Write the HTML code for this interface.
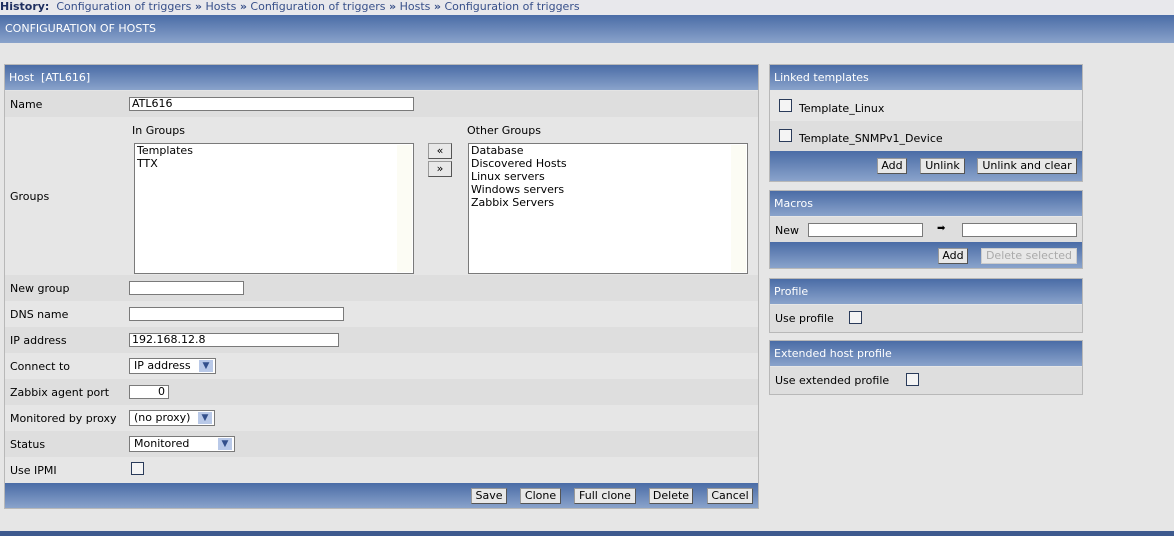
<html><head><style>
*{box-sizing:border-box}
body{margin:0;width:1174px;height:536px;background:#e6e6e6;font:11px "DejaVu Sans","Liberation Sans",sans-serif;color:#000;position:relative;overflow:hidden}
.a{position:absolute}
.hd{background:linear-gradient(#4a6ca6,#8aa3cb);color:#fff}
.r1{background:#dedede}.r2{background:#e6e6e6}
.in{position:absolute;background:#fff;border:1px solid #7a7a7a;height:14px;font-size:11px;line-height:12px;padding-left:2px}
.btn{position:absolute;background:#e8e8e8;border:1px solid #999;border-right-color:#555;border-bottom-color:#555;height:16px;line-height:14px;font-size:11px;text-align:center}
.cb{position:absolute;width:13px;height:13px;border:1px solid #2a3b5a;background:#f4f4f4}
.sel{position:absolute;background:#fff;border:1px solid #7a7a7a;height:16px;line-height:14px;padding-left:4px}
.sel i{position:absolute;right:2px;top:1px;width:14px;height:12px;background:#b9c9e8;color:#34508c;font-style:normal;font-size:9px;text-align:center;line-height:12px}
.lb{position:absolute;left:10px}
</style></head><body>
<div class="a" style="left:0;top:0;width:1174px;height:15px;background:#e8e8ec;line-height:14px"><b style="color:#1f2f60">History:</b>&nbsp; <span style="color:#38508a">Configuration of triggers <b>»</b> Hosts <b>»</b> Configuration of triggers <b>»</b> Hosts <b>»</b> Configuration of triggers</span></div>
<div class="a hd" style="left:0;top:15px;width:1174px;height:28px;line-height:28px;padding-left:5px">CONFIGURATION OF HOSTS</div>

<div class="a" style="left:4px;top:64px;width:755px;height:445px;border:1px solid #b8b8b8;background:#e4e4e4"></div>
<div class="a hd" style="left:5px;top:65px;width:753px;height:25px;line-height:25px;padding-left:4px">Host &nbsp;[ATL616]</div>
<div class="a r1" style="left:5px;top:91px;width:753px;height:26px"></div>
<div class="a r2" style="left:5px;top:117px;width:753px;height:158px"></div>
<div class="a r1" style="left:5px;top:275px;width:753px;height:26px"></div>
<div class="a r2" style="left:5px;top:301px;width:753px;height:26px"></div>
<div class="a r1" style="left:5px;top:327px;width:753px;height:26px"></div>
<div class="a r2" style="left:5px;top:353px;width:753px;height:26px"></div>
<div class="a r1" style="left:5px;top:379px;width:753px;height:26px"></div>
<div class="a r2" style="left:5px;top:405px;width:753px;height:26px"></div>
<div class="a r1" style="left:5px;top:431px;width:753px;height:26px"></div>
<div class="a r2" style="left:5px;top:457px;width:753px;height:26px"></div>
<div class="a hd" style="left:5px;top:483px;width:753px;height:25px"></div>

<div class="lb" style="top:98px">Name</div><div class="in" style="left:129px;top:97px;width:285px">ATL616</div>
<div class="lb" style="top:190px">Groups</div>
<div class="a" style="left:132px;top:124px">In Groups</div>
<div class="a" style="left:467px;top:124px">Other Groups</div>
<div class="a" style="left:134px;top:143px;width:280px;height:131px;background:#fff;border:1px solid #7a7a7a;line-height:13px;padding-left:2px">Templates<br>TTX</div>
<div class="a" style="left:397px;top:145px;width:15px;height:127px;background:#fcfcf4"></div>
<div class="a" style="left:468px;top:143px;width:280px;height:131px;background:#fff;border:1px solid #7a7a7a;line-height:13px;padding-left:2px">Database<br>Discovered Hosts<br>Linux servers<br>Windows servers<br>Zabbix Servers</div>
<div class="a" style="left:731px;top:145px;width:15px;height:127px;background:#fcfcf4"></div>
<div class="btn" style="left:428px;top:143px;width:24px">«</div>
<div class="btn" style="left:428px;top:161px;width:24px">»</div>
<div class="lb" style="top:282px">New group</div><div class="in" style="left:129px;top:281px;width:115px"></div>
<div class="lb" style="top:308px">DNS name</div><div class="in" style="left:129px;top:307px;width:215px"></div>
<div class="lb" style="top:334px">IP address</div><div class="in" style="left:129px;top:333px;width:210px">192.168.12.8</div>
<div class="lb" style="top:360px">Connect to</div><div class="sel" style="left:129px;top:358px;width:87px">IP address<i>▼</i></div>
<div class="lb" style="top:386px">Zabbix agent port</div><div class="in" style="left:129px;top:385px;width:40px;text-align:right;padding-right:3px">0</div>
<div class="lb" style="top:412px">Monitored by proxy</div><div class="sel" style="left:129px;top:410px;width:86px">(no proxy)<i>▼</i></div>
<div class="lb" style="top:438px">Status</div><div class="sel" style="left:129px;top:436px;width:106px">Monitored<i>▼</i></div>
<div class="lb" style="top:464px">Use IPMI</div><div class="cb" style="left:131px;top:462px"></div>
<div class="btn" style="left:471px;top:488px;width:36px">Save</div>
<div class="btn" style="left:520px;top:488px;width:41px">Clone</div>
<div class="btn" style="left:574px;top:488px;width:62px">Full clone</div>
<div class="btn" style="left:649px;top:488px;width:44px">Delete</div>
<div class="btn" style="left:707px;top:488px;width:46px">Cancel</div>

<div class="a" style="left:769px;top:64px;width:314px;height:118px;border:1px solid #b8b8b8"></div>
<div class="a hd" style="left:770px;top:65px;width:312px;height:25px;line-height:25px;padding-left:4px">Linked templates</div>
<div class="a r2" style="left:770px;top:91px;width:312px;height:30px"></div>
<div class="a r1" style="left:770px;top:121px;width:312px;height:30px"></div>
<div class="cb" style="left:779px;top:99px"></div><div class="a" style="left:799px;top:102px">Template_Linux</div>
<div class="cb" style="left:779px;top:129px"></div><div class="a" style="left:799px;top:132px">Template_SNMPv1_Device</div>
<div class="a hd" style="left:770px;top:151px;width:312px;height:30px"></div>
<div class="btn" style="left:877px;top:158px;width:30px">Add</div>
<div class="btn" style="left:920px;top:158px;width:45px">Unlink</div>
<div class="btn" style="left:977px;top:158px;width:100px">Unlink and clear</div>

<div class="a" style="left:769px;top:190px;width:314px;height:79px;border:1px solid #b8b8b8"></div>
<div class="a hd" style="left:770px;top:191px;width:312px;height:25px;line-height:25px;padding-left:4px">Macros</div>
<div class="a r1" style="left:770px;top:217px;width:312px;height:25px"></div>
<div class="a" style="left:775px;top:224px">New</div>
<div class="in" style="left:808px;top:223px;width:115px"></div>
<div class="a" style="left:937px;top:223px;font-size:10px">➡</div>
<div class="in" style="left:962px;top:223px;width:115px"></div>
<div class="a hd" style="left:770px;top:242px;width:312px;height:26px"></div>
<div class="btn" style="left:938px;top:248px;width:30px">Add</div>
<div class="btn" style="left:981px;top:248px;width:96px;color:#aaa;border-color:#ccc">Delete selected</div>

<div class="a" style="left:769px;top:278px;width:314px;height:55px;border:1px solid #b8b8b8"></div>
<div class="a hd" style="left:770px;top:279px;width:312px;height:25px;line-height:25px;padding-left:4px">Profile</div>
<div class="a r1" style="left:770px;top:305px;width:312px;height:27px"></div>
<div class="a" style="left:775px;top:312px">Use profile</div><div class="cb" style="left:849px;top:311px"></div>

<div class="a" style="left:769px;top:340px;width:314px;height:55px;border:1px solid #b8b8b8"></div>
<div class="a hd" style="left:770px;top:341px;width:312px;height:25px;line-height:25px;padding-left:4px">Extended host profile</div>
<div class="a r1" style="left:770px;top:367px;width:312px;height:27px"></div>
<div class="a" style="left:775px;top:374px">Use extended profile</div><div class="cb" style="left:906px;top:373px"></div>

<div class="a" style="left:0;top:531px;width:1174px;height:5px;background:#3e5a8e"></div>
</body></html>
